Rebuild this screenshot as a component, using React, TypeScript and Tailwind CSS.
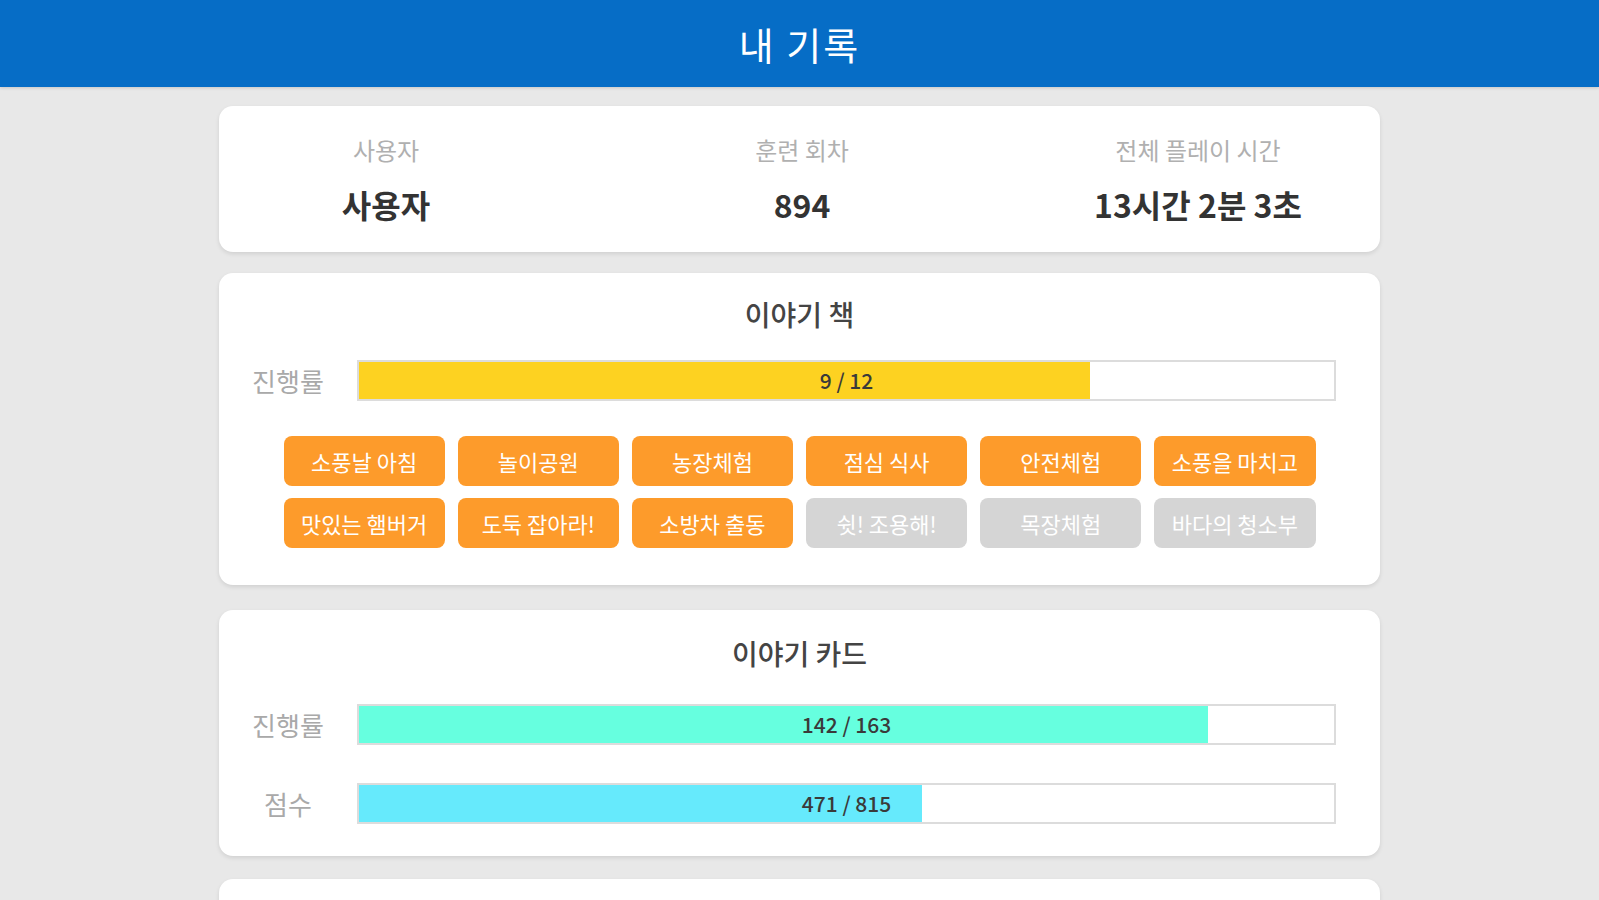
import React from "react";

const font = { fontFamily: '"Noto Sans CJK KR", "Noto Sans", sans-serif' };

type Chapter = { title: string; done: boolean };

const chapters: Chapter[] = [
  { title: "소풍날 아침", done: true },
  { title: "놀이공원", done: true },
  { title: "농장체험", done: true },
  { title: "점심 식사", done: true },
  { title: "안전체험", done: true },
  { title: "소풍을 마치고", done: true },
  { title: "맛있는 햄버거", done: true },
  { title: "도둑 잡아라!", done: true },
  { title: "소방차 출동", done: true },
  { title: "쉿! 조용해!", done: false },
  { title: "목장체험", done: false },
  { title: "바다의 청소부", done: false },
];

function Bar({ value, max, fill }: { value: number; max: number; fill: string }) {
  const pct = (value / max) * 100;
  return (
    <div className="relative h-[41px] flex-1 border-2 border-[#dcdcdc] bg-white">
      <div className={`h-full ${fill}`} style={{ width: `${pct}%` }} />
      <div className="absolute inset-0 flex items-center justify-center text-[21px] font-medium text-[#3a3a3a]">
        {value} / {max}
      </div>
    </div>
  );
}

function Row({ label, children }: { label: string; children: React.ReactNode }) {
  return (
    <div className="flex items-center pr-[44px]">
      <div className="w-[138px] text-center text-[26px] text-[#a9a9a9]">{label}</div>
      {children}
    </div>
  );
}

function Stat({ label, value }: { label: string; value: string }) {
  return (
    <div className="flex flex-col items-center">
      <div className="text-[24px] leading-[29px] text-[#b0b0b0]">{label}</div>
      <div className="mt-[21px] text-[32px] leading-[38px] font-semibold text-[#333]">{value}</div>
    </div>
  );
}

export default function App() {
  return (
    <div className="min-h-screen bg-[#e8e8e8]" style={font}>
      <header className="flex h-[87px] items-center justify-center bg-[#066dc6] shadow-[0_1px_3px_rgba(0,0,0,0.15)]">
        <h1 className="text-[38px] tracking-[2px] text-white">내 기록</h1>
      </header>

      <main className="mx-auto flex w-[1161px] flex-col pt-[19px]">
        <section className="grid h-[146px] grid-cols-[334px_498px_294px] rounded-[14px] bg-white pt-[29px] shadow-[0_2px_4px_rgba(0,0,0,0.1)]">
          <Stat label="사용자" value="사용자" />
          <Stat label="훈련 회차" value="894" />
          <Stat label="전체 플레이 시간" value="13시간 2분 3초" />
        </section>

        <section className="mt-[21px] h-[312px] rounded-[14px] bg-white pt-[24px] shadow-[0_2px_4px_rgba(0,0,0,0.1)]">
          <h2 className="text-center text-[28px] leading-[34px] font-medium text-[#444]">이야기 책</h2>
          <div className="mt-[29px]">
            <Row label="진행률">
              <Bar value={9} max={12} fill="bg-[#fdd221]" />
            </Row>
          </div>
          <div className="mx-auto mt-[35px] grid w-[1032px] grid-cols-6 gap-x-[13px] gap-y-[12px]">
            {chapters.map((c) => (
              <div
                key={c.title}
                className={`flex h-[50px] items-center justify-center rounded-[8px] text-[22px] text-white ${
                  c.done ? "bg-[#fd9b2b]" : "bg-[#d5d5d5]"
                }`}
              >
                {c.title}
              </div>
            ))}
          </div>
        </section>

        <section className="mt-[25px] h-[246px] rounded-[14px] bg-white pt-[26px] shadow-[0_2px_4px_rgba(0,0,0,0.1)]">
          <h2 className="text-center text-[28px] leading-[34px] font-medium text-[#444]">이야기 카드</h2>
          <div className="mt-[34px] flex flex-col gap-[38px]">
            <Row label="진행률">
              <Bar value={142} max={163} fill="bg-[#66ffdf]" />
            </Row>
            <Row label="점수">
              <Bar value={471} max={815} fill="bg-[#66eafc]" />
            </Row>
          </div>
        </section>

        <section className="mt-[23px] h-[200px] rounded-[14px] bg-white shadow-[0_2px_4px_rgba(0,0,0,0.1)]" />
      </main>
    </div>
  );
}
